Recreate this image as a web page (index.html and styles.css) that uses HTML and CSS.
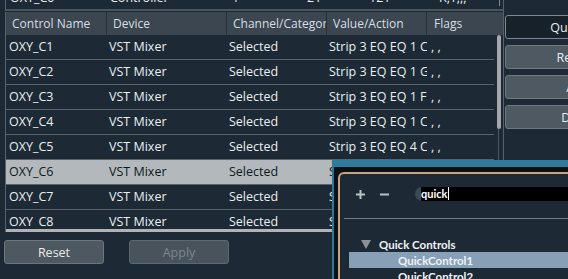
FILE: index.html
```html
<!DOCTYPE html>
<html lang="en">
<head>
  <meta charset="UTF-8" />
  <meta name="viewport" content="width=device-width, initial-scale=1.0"/>
  <title>Generic Remote</title>
  <link rel="stylesheet" href="styles.css">
</head>
<body>
  <div class="window">
    <div class="left">
      <div class="prev-table">
        <div class="prev-row">
          <span class="p1">OXY_C0</span>
          <span class="p2">Controller</span>
          <span class="p3">1</span>
          <span class="p4">21</span>
          <span class="p5">121</span>
          <span class="p6">R,T,,,</span>
        </div>
      </div>

      <div class="table">
        <div class="thead">
          <div class="th c1">Control Name</div>
          <div class="th c2">Device</div>
          <div class="th c3">Channel/Category</div>
          <div class="th c4">Value/Action</div>
          <div class="th c5">Flags</div>
        </div>
        <div class="tbody">
          <div class="rows">
            <div class="row">
              <div class="td c1">OXY_C1</div><div class="td c2">VST Mixer</div><div class="td c3">Selected</div><div class="td c4">Strip 3 EQ EQ 1 Cutoff</div><div class="td c5">, ,</div>
            </div>
            <div class="row">
              <div class="td c1">OXY_C2</div><div class="td c2">VST Mixer</div><div class="td c3">Selected</div><div class="td c4">Strip 3 EQ EQ 1 Gain</div><div class="td c5">, ,</div>
            </div>
            <div class="row">
              <div class="td c1">OXY_C3</div><div class="td c2">VST Mixer</div><div class="td c3">Selected</div><div class="td c4">Strip 3 EQ EQ 1 Freq</div><div class="td c5">, ,</div>
            </div>
            <div class="row">
              <div class="td c1">OXY_C4</div><div class="td c2">VST Mixer</div><div class="td c3">Selected</div><div class="td c4">Strip 3 EQ EQ 1 Cutoff</div><div class="td c5">, ,</div>
            </div>
            <div class="row">
              <div class="td c1">OXY_C5</div><div class="td c2">VST Mixer</div><div class="td c3">Selected</div><div class="td c4">Strip 3 EQ EQ 4 Cutoff</div><div class="td c5">, ,</div>
            </div>
            <div class="row selected">
              <div class="td c1">OXY_C6</div><div class="td c2">VST Mixer</div><div class="td c3">Selected</div><div class="td c4">Strip 3 EQ EQ 4 Gain</div><div class="td c5">, ,</div>
            </div>
            <div class="row">
              <div class="td c1">OXY_C7</div><div class="td c2">VST Mixer</div><div class="td c3">Selected</div><div class="td c4">Strip 3 EQ EQ 4 Freq</div><div class="td c5">, ,</div>
            </div>
            <div class="row">
              <div class="td c1">OXY_C8</div><div class="td c2">VST Mixer</div><div class="td c3">Selected</div><div class="td c4">Strip 3 EQ EQ 4 Q</div><div class="td c5">, ,</div>
            </div>
          </div>
          <div class="vscroll">
            <div class="thumb"></div>
            <div class="track"></div>
          </div>
        </div>
        <div class="hscroll"><div class="hbar"></div></div>
      </div>

      <div class="footer">
        <button class="btn">Reset</button>
        <button class="btn disabled">Apply</button>
      </div>
    </div>

    <div class="side">
      <button class="side-btn active">Quick Add</button>
      <button class="side-btn">Remove</button>
      <button class="side-btn">Auto</button>
      <button class="side-btn">Delete</button>
    </div>
  </div>

  <div class="popup">
    <div class="popup-inner">
      <div class="toolbar">
        <svg class="tool" width="9" height="9" viewBox="0 0 9 9"><path d="M0 4.5H9M4.5 0V9" stroke="#b9c1c6" stroke-width="2"/></svg>
        <svg class="tool minus" width="9" height="9" viewBox="0 0 9 9"><path d="M0 4.5H9" stroke="#b9c1c6" stroke-width="2"/></svg>
        <div class="search">
          <div class="field">quick<span class="caret"></span></div>
        </div>
      </div>
      <div class="divider"></div>
      <div class="tree">
        <div class="node">
          <svg class="arrow" width="10" height="9" viewBox="0 0 10 9"><polygon points="0,0 10,0 5,9" fill="#8b9399"/></svg>
          Quick Controls
        </div>
        <div class="node child selected">QuickControl1</div>
        <div class="node child">QuickControl2</div>
      </div>
    </div>
  </div>
</body>
</html>
```

FILE: styles.css
```css
body {
  margin: 0;
  background-color: #1d2a35;
  font-family: 'Open Sans', 'Noto Sans', sans-serif;
  font-size: 12.5px;
  color: #e9eef1;
  overflow: hidden;
}

.window {
  display: flex;
  height: 279px;
  overflow: hidden;
}

.left {
  flex-shrink: 0;
  width: 498px;
  padding-left: 5px;
  border-right: 1px solid #56616a;
}

/* table above, scrolled mostly out of view */
.prev-table {
  height: 9px;
  overflow: hidden;
  border-left: 1px solid #56616a;
  border-bottom: 2px solid #4a555d;
}

.prev-row {
  display: flex;
  width: 493px;
  margin-top: -10px;
  line-height: 16px;
  white-space: nowrap;
  border-right: 1px solid #7d868c;
}

.prev-row span { box-sizing: border-box; }
.p1 { width: 100px; padding-left: 4px; }
.p2 { width: 120px; padding-left: 4px; }
.p3 { width: 78px; padding-left: 6px; }
.p4 { width: 62px; padding-left: 3px; }
.p5 { width: 70px; padding-left: 3px; }
.p6 { padding-left: 3px; }

.table {
  margin-top: 1px;
  border-left: 1px solid #56616a;
}

.thead {
  display: flex;
  height: 23px;
  line-height: 23px;
  font-size: 12px;
  background-color: #3b4650;
  color: #d6dee4;
}

.th {
  box-sizing: border-box;
  padding-left: 6px;
  overflow: hidden;
  white-space: nowrap;
  border-right: 1px solid #25303a;
}

.th.c5 { border-right: none; padding-left: 7px; }

.c1 { width: 101px; flex-shrink: 0; }
.c2 { width: 120px; flex-shrink: 0; }
.c3 { width: 100px; flex-shrink: 0; }
.c4 { width: 100px; flex-shrink: 0; }
.c5 { flex: 1; }

.tbody {
  display: flex;
  height: 192px;
  overflow: hidden;
}

.rows {
  width: 488px;
}

.row {
  display: flex;
  height: 24px;
  line-height: 24px;
  border-bottom: 1px solid #59646d;
}

.row.selected {
  background-color: #b3b8bc;
  color: #0f1820;
}

.td {
  box-sizing: border-box;
  padding-left: 2px;
  overflow: hidden;
  white-space: nowrap;
}

.td.c1 { padding-left: 3px; }
.td.c4 { padding-right: 1px; }
.td.c5 { padding-left: 4px; }

.vscroll {
  flex: 1;
  display: flex;
  flex-direction: column;
}

.thumb {
  width: 4px;
  height: 94px;
  margin-left: 3px;
  border-radius: 2px;
  background-color: #a3a8ac;
}

.track {
  flex: 1;
  width: 1px;
  margin-left: 4px;
  background-color: #4a555e;
}

.hscroll {
  padding-top: 2px;
}

.hbar {
  width: 488px;
  height: 3px;
  background-color: #b0b4b8;
}

.footer {
  display: flex;
  gap: 25px;
  margin-left: -1px;
  padding-top: 8px;
}

.btn {
  width: 100px;
  height: 24px;
  padding: 0;
  border: 1px solid #6b757c;
  border-radius: 3px;
  background-color: #4e5860;
  color: #e6ebee;
  font: inherit;
}

.btn.disabled {
  color: #7c868e;
  background-color: #48535b;
  border-color: #5d676e;
}

.side {
  display: flex;
  flex-direction: column;
  gap: 6px;
  padding: 15px 0 0 1px;
}

.side-btn {
  flex-shrink: 0;
  width: 150px;
  height: 24px;
  padding: 0;
  border: 1px solid #6e787f;
  border-radius: 3px;
  background-color: #4f5961;
  color: #e8edf0;
  font: inherit;
}

.side-btn.active {
  background-color: #16212a;
  border-color: #7d878d;
}

/* floating picker window over the table */
.popup {
  position: absolute;
  left: 332px;
  top: 160px;
  width: 236px;
  height: 119px;
  box-sizing: border-box;
  padding: 5px 0 0 4px;
  border-left: 2px solid #2c7898;
  border-top: 7px solid #2e7b9b;
  background-color: #0c1114;
  font-family: Lato, 'Open Sans', sans-serif;
  font-size: 11.5px;
  font-weight: bold;
}

.popup-inner {
  height: 100%;
  box-sizing: border-box;
  border-top: 2px solid #c9a484;
  border-left: 2px solid #c9a484;
  border-top-left-radius: 6px;
  background-color: #1d2a35;
}

.toolbar {
  display: flex;
  align-items: center;
  height: 14px;
  margin-top: 13px;
  padding-left: 16px;
}

.tool.minus { margin-left: 15px; }

.search {
  flex: 1;
  display: flex;
  margin-left: 26px;
}

.search::before {
  content: '';
  flex-shrink: 0;
  width: 14px;
  height: 14px;
  margin-right: -8px;
  border-radius: 50%;
  background-color: #3d4953;
}

.field {
  flex: 1;
  height: 14px;
  line-height: 14px;
  padding-left: 0;
  background-color: #000;
  color: #fff;
  font-size: 11px;
  white-space: nowrap;
}

.caret {
  display: inline-block;
  width: 1px;
  height: 13px;
  margin-left: 1px;
  vertical-align: top;
  background-color: #fff;
}

.divider {
  height: 1px;
  margin: 17px 0 0 4px;
  background-color: #737c82;
}

.tree {
  margin-top: 16px;
  color: #eef3f6;
}

.node {
  display: flex;
  align-items: center;
  height: 16px;
  padding-left: 21px;
  white-space: nowrap;
}

.node:first-child { padding-top: 1px; }

.arrow { margin-right: 8px; }

.node.child { padding-left: 58px; }

.node.child.selected {
  margin-left: 9px;
  padding-left: 49px;
  background-color: #87a0b8;
}
```
